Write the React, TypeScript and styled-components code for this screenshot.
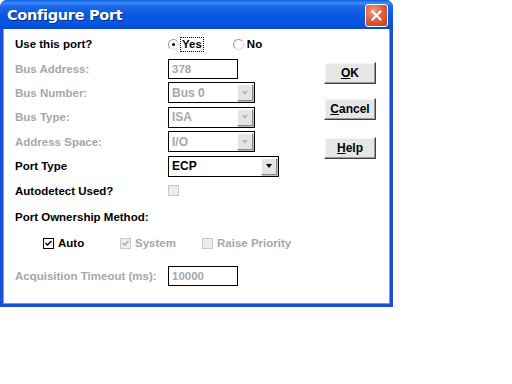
import styled, { createGlobalStyle } from "styled-components";

const GlobalStyle = createGlobalStyle`
  html, body {
    margin: 0;
    padding: 0;
    background: #ffffff;
  }
  body {
    width: 512px;
    height: 384px;
    overflow: hidden;
  }
`;

const DISABLED = "#a7a6aa";

const Window = styled.div`
  width: 393px;
  height: 307px;
  display: flex;
  flex-direction: column;
  border-radius: 7px 7px 0 0;
  overflow: hidden;
  background: #1a4fd8;
  font-family: "Liberation Sans", Arial, sans-serif;
`;

const TitleBar = styled.div`
  height: 29px;
  flex: none;
  display: flex;
  align-items: center;
  justify-content: space-between;
  padding: 0 5px 0 7px;
  background: linear-gradient(
    180deg,
    #0a5ee0 0%,
    #3d8cf5 10%,
    #1a67ea 22%,
    #0757e0 55%,
    #0657e3 80%,
    #0848c9 100%
  );
`;

const Title = styled.span`
  color: #ffffff;
  font: bold 14.5px "DejaVu Sans", "Liberation Sans", sans-serif;
  letter-spacing: -0.3px;
  text-shadow: 1px 1px 0 #0a2b8a;
  margin-top: 1px;
`;

const CloseButton = styled.div`
  width: 21px;
  height: 21px;
  border: 1px solid #ffffff;
  border-radius: 3px;
  background: radial-gradient(circle at 35% 30%, #f0a080 0%, #e06040 45%, #c43c1c 100%);
  display: grid;
  place-items: center;
  margin-top: 1px;
`;

const Body = styled.div`
  flex: 1;
  margin: 0 3px 3px;
  background: #ffffff;
  display: flex;
  padding: 3px 0 0 11px;
  border-left: 1px solid #6f98ec;
  border-right: 1px solid #6f98ec;
  border-bottom: 1px solid #6f98ec;
`;

const Form = styled.div`
  width: 296px;
  display: flex;
  flex-direction: column;
`;

const Row = styled.div<{ $h?: number }>`
  height: ${({ $h }) => $h ?? 24.4}px;
  display: grid;
  grid-template-columns: 153px 1fr;
  align-items: center;
`;

const Label = styled.span<{ $disabled?: boolean }>`
  font-size: 11.5px;
  font-weight: bold;
  color: ${({ $disabled }) => ($disabled ? DISABLED : "#000000")};
  white-space: nowrap;
`;

const RadioGroup = styled.div`
  display: flex;
  align-items: center;
`;

const RadioItem = styled.label<{ $gap?: number }>`
  display: flex;
  align-items: center;
  gap: 2px;
  margin-right: ${({ $gap }) => $gap ?? 0}px;
`;

const RadioCircle = styled.span<{ $checked?: boolean }>`
  width: 9px;
  height: 9px;
  border-radius: 50%;
  border: 1px solid #9a9a9a;
  border-right-color: #dcdcdc;
  border-bottom-color: #dcdcdc;
  background: #ffffff;
  display: grid;
  place-items: center;
  &::after {
    content: "";
    width: 3px;
    height: 3px;
    border-radius: 50%;
    background: ${({ $checked }) => ($checked ? "#000" : "transparent")};
  }
`;

const RadioText = styled.span<{ $focused?: boolean }>`
  font-size: 11.5px;
  font-weight: bold;
  color: #000;
  padding: 0 1px;
  outline: ${({ $focused }) => ($focused ? "1px dotted #000" : "none")};
  line-height: 13px;
`;

const TextBox = styled.div<{ $w: number }>`
  width: ${({ $w }) => $w}px;
  height: 20px;
  box-sizing: border-box;
  border: 1px solid #000;
  background: #ffffff;
  display: flex;
  align-items: center;
  padding-left: 3px;
  font-size: 11.5px;
  font-weight: bold;
  color: ${DISABLED};
`;

const Combo = styled.div<{ $w: number; $disabled?: boolean }>`
  width: ${({ $w }) => $w}px;
  height: 21px;
  box-sizing: border-box;
  border: 1px solid #000;
  background: #ffffff;
  display: flex;
  align-items: center;
  justify-content: space-between;
  padding: 0 1px 0 3px;
  font-size: 12px;
  font-weight: bold;
  color: ${({ $disabled }) => ($disabled ? DISABLED : "#000")};
`;

const ComboButton = styled.span<{ $disabled?: boolean }>`
  width: 16px;
  height: 17px;
  box-sizing: border-box;
  background: #e4e4e4;
  border: 1px solid;
  border-color: #ffffff #8a8a8a #8a8a8a #ffffff;
  box-shadow: 1px 1px 0 #c0c0c0;
  display: grid;
  place-items: center;
  &::after {
    content: "";
    border-left: 3.5px solid transparent;
    border-right: 3.5px solid transparent;
    border-top: 4px solid ${({ $disabled }) => ($disabled ? "#b8b8b8" : "#000")};
  }
`;

const Box = styled.span<{ $disabled?: boolean }>`
  width: 11px;
  height: 11px;
  box-sizing: border-box;
  border: 1px solid ${({ $disabled }) => ($disabled ? "#c8c8c8" : "#000")};
  background: ${({ $disabled }) => ($disabled ? "#ededed" : "#fff")};
  display: grid;
  place-items: center;
`;

const CheckRow = styled.div`
  height: 25px;
  display: flex;
  align-items: center;
  padding-left: 28px;
`;

const CheckItem = styled.label<{ $w: number }>`
  width: ${({ $w }) => $w}px;
  display: flex;
  align-items: center;
  gap: 4px;
`;

const CheckText = styled.span<{ $disabled?: boolean }>`
  font-size: 11.5px;
  font-weight: bold;
  color: ${({ $disabled }) => ($disabled ? DISABLED : "#000")};
`;

const Buttons = styled.div`
  display: flex;
  flex-direction: column;
  padding-top: 30px;
  margin-left: 13px;
`;

const PushButton = styled.div<{ $mt: number }>`
  width: 52px;
  height: 22px;
  margin-top: ${({ $mt }) => $mt}px;
  box-sizing: border-box;
  background: #e6e6e6;
  border: 1px solid;
  border-color: #ffffff #404040 #404040 #ffffff;
  box-shadow: inset -1px -1px 0 #9a9a9a, inset 1px 1px 0 #f4f4f4;
  display: grid;
  place-items: center;
  font-size: 12px;
  font-weight: bold;
  color: #000;
  u {
    text-decoration: underline;
  }
`;

function Check({ checked, disabled }: { checked?: boolean; disabled?: boolean }) {
  return (
    <Box $disabled={disabled}>
      {checked && (
        <svg width="7" height="7" viewBox="0 0 7 7">
          <path d="M0.5 3 L2.5 5 L6.5 1" stroke={disabled ? "#a8a8a8" : "#000"} strokeWidth="1.5" fill="none" />
        </svg>
      )}
    </Box>
  );
}

export default function App() {
  return (
    <>
      <GlobalStyle />
      <Window>
        <TitleBar>
          <Title>Configure Port</Title>
          <CloseButton>
            <svg width="11" height="11" viewBox="0 0 11 11">
              <path d="M1.5 1.5 L9.5 9.5 M9.5 1.5 L1.5 9.5" stroke="#ffffff" strokeWidth="2" strokeLinecap="square" />
            </svg>
          </CloseButton>
        </TitleBar>
        <Body>
          <Form>
            <Row>
              <Label>Use this port?</Label>
              <RadioGroup>
                <RadioItem $gap={30}>
                  <RadioCircle $checked />
                  <RadioText $focused>Yes</RadioText>
                </RadioItem>
                <RadioItem>
                  <RadioCircle />
                  <RadioText>No</RadioText>
                </RadioItem>
              </RadioGroup>
            </Row>
            <Row>
              <Label $disabled>Bus Address:</Label>
              <TextBox $w={70}>378</TextBox>
            </Row>
            <Row>
              <Label $disabled>Bus Number:</Label>
              <Combo $w={87} $disabled>
                Bus 0
                <ComboButton $disabled />
              </Combo>
            </Row>
            <Row>
              <Label $disabled>Bus Type:</Label>
              <Combo $w={87} $disabled>
                ISA
                <ComboButton $disabled />
              </Combo>
            </Row>
            <Row>
              <Label $disabled>Address Space:</Label>
              <Combo $w={87} $disabled>
                I/O
                <ComboButton $disabled />
              </Combo>
            </Row>
            <Row>
              <Label>Port Type</Label>
              <Combo $w={111}>
                ECP
                <ComboButton />
              </Combo>
            </Row>
            <Row>
              <Label>Autodetect Used?</Label>
              <Check disabled />
            </Row>
            <Row $h={28}>
              <Label>Port Ownership Method:</Label>
            </Row>
            <CheckRow>
              <CheckItem $w={77}>
                <Check checked />
                <CheckText>Auto</CheckText>
              </CheckItem>
              <CheckItem $w={82}>
                <Check checked disabled />
                <CheckText $disabled>System</CheckText>
              </CheckItem>
              <CheckItem $w={100}>
                <Check disabled />
                <CheckText $disabled>Raise Priority</CheckText>
              </CheckItem>
            </CheckRow>
            <Row $h={40}>
              <Label $disabled>Acquisition Timeout (ms):</Label>
              <TextBox $w={70}>10000</TextBox>
            </Row>
          </Form>
          <Buttons>
            <PushButton $mt={0}>
              <span><u>O</u>K</span>
            </PushButton>
            <PushButton $mt={14}>
              <span><u>C</u>ancel</span>
            </PushButton>
            <PushButton $mt={17}>
              <span><u>H</u>elp</span>
            </PushButton>
          </Buttons>
        </Body>
      </Window>
    </>
  );
}
